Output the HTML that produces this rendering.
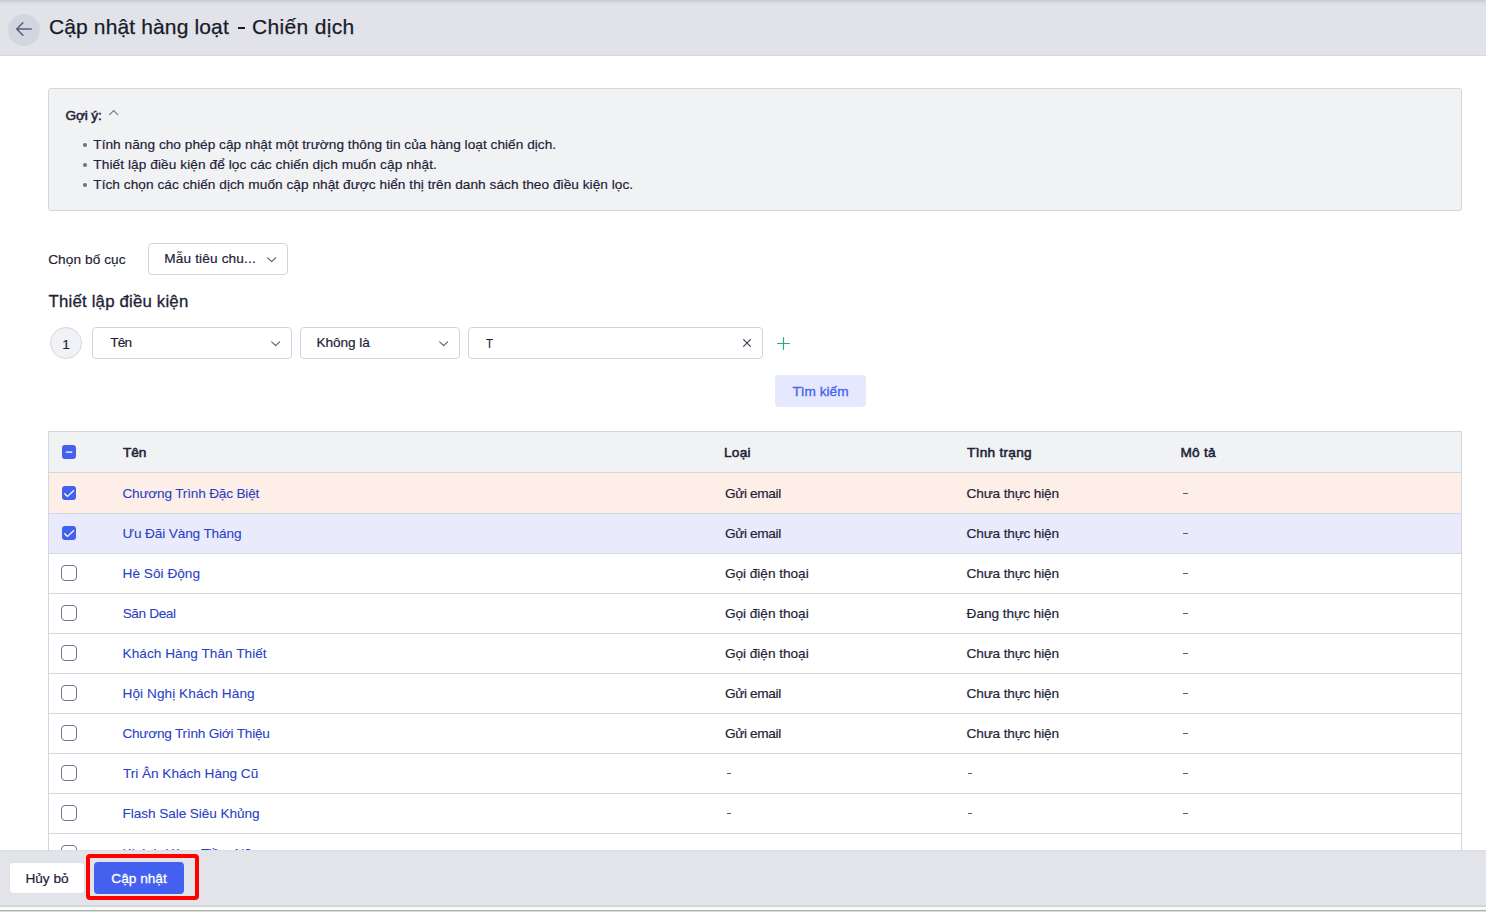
<!DOCTYPE html>
<html lang="vi">
<head>
<meta charset="utf-8">
<title>Cập nhật hàng loạt - Chiến dịch</title>
<style>
*{box-sizing:border-box;margin:0;padding:0}
html,body{width:1486px;height:912px;overflow:hidden;background:#fff}
body{font-family:"Liberation Sans",sans-serif;font-size:13.65px;color:#1d2236;position:relative;-webkit-text-stroke:.18px #1d2236}
.abs{position:absolute}
#hdr{left:0;top:0;width:1486px;height:56px;background:linear-gradient(#c9cacf 0,#dcdde2 3px,#e2e3e8 6px,#e2e3e8 100%);border-bottom:1px solid #d6d8de}
#back{left:8px;top:14px;width:32px;height:32px;border-radius:50%;background:#d2d6e0}
#title{left:0;top:14px;font-size:21px;line-height:26px;color:#161b2d;white-space:nowrap;-webkit-text-stroke:.25px #161b2d}
#title span{position:absolute;top:0}
#hint{left:48px;top:88px;width:1414px;height:123px;background:#f1f2f4;border:1px solid #d3d6df;border-radius:3px}
#hint .h{left:16.5px;top:19px;font-size:13.65px;line-height:16px;white-space:nowrap;letter-spacing:-.14px;-webkit-text-stroke:.55px #1f2438}
#hint ul{list-style:none}
#hint li{position:absolute;left:44.3px;white-space:nowrap;line-height:20px;font-size:13.65px}
#hint li:before{content:"";position:absolute;left:-10px;top:8px;width:4px;height:4px;border-radius:50%;background:#6a7086}
.lbl{white-space:nowrap}
.sel{border:1px solid #d0d3e0;border-radius:4px;background:#fff;height:32px}
.sel span{position:absolute;top:7px;line-height:16px;white-space:nowrap;font-size:13.65px}
.sel svg{position:absolute}
table{border-collapse:collapse}
#tbl{left:48px;top:431px;width:1414px;border:1px solid #d4d7df;border-bottom:none}
.row{position:relative;height:40px;border-bottom:1px solid #d4d7df;background:#fff}
.row.hd{height:41px;background:#f1f2f4;-webkit-text-stroke:.55px #1f2438}
.row span{position:absolute;top:12px;line-height:16px;white-space:nowrap;font-size:13.65px}
.row.hd span,.row.r1 span{top:13px}
.row.r1{height:41px;background:#fdeee8}
.row.r1 .cb.on{top:13px}
.row.r1 span.d4{top:20px}
.row.r2{background:#e9ebfd}
.row .d2,.row .d3,.row .d4{top:19px;width:4.4px;height:1.4px;background:#555a6e;-webkit-text-stroke:0;font-size:0;line-height:0;overflow:hidden}
.row .d2{left:677.6px}
.row .d3{left:918.8px}
.row .d4{left:1134.2px}
.row a{color:#2a40c5;text-decoration:none;-webkit-text-stroke:.08px #2a40c5}
.cb{position:absolute;left:12px;top:11px;width:16px;height:16px;border-radius:4px;border:1.3px solid #6e7591;background:#fff}
.cb.on{left:13px;top:12px;width:14px;height:14px;border-radius:3px;border:none;background:#4361ee}
.cb svg{position:absolute;left:0;top:0}
#ftr{left:0;top:850px;width:1486px;height:62px;background:#e3e4e9;border-top:1px solid #dcdde2}
.btn{position:absolute;height:32px;border-radius:4px;font-size:13.65px;line-height:32px;text-align:center;white-space:nowrap}
</style>
</head>
<body>
<div id="hdr" class="abs">
  <div id="back" class="abs"><svg width="32" height="32" viewBox="0 0 32 32" style="position:absolute;left:0;top:0"><path d="M23.2 15H9.2M14.9 8.8L8.7 15L14.9 21.2" fill="none" stroke="#5b6079" stroke-width="1.6" stroke-linecap="round" stroke-linejoin="round"/></svg></div>
  <div id="title" class="abs"><span style="left:48.9px;letter-spacing:.14px">Cập nhật hàng loạt</span><span style="left:237.5px;top:13px;width:7.2px;height:2px;background:#161b2d"></span><span style="left:252.1px;letter-spacing:.328px">Chiến dịch</span></div>
</div>

<div id="hint" class="abs">
  <div class="h abs">Gợi ý:</div>
  <svg class="abs" style="left:60px;top:21px" width="10" height="6" viewBox="0 0 10 6"><path d="M.6 4.7L4.65 .7L8.7 4.7" fill="none" stroke="#6a7086" stroke-width="1.1" stroke-linecap="round" stroke-linejoin="round"/></svg>
  <ul>
    <li style="top:46px;letter-spacing:.036px">Tính năng cho phép cập nhật một trường thông tin của hàng loạt chiến dịch.</li>
    <li style="top:66px;letter-spacing:.084px">Thiết lập điều kiện để lọc các chiến dịch muốn cập nhật.</li>
    <li style="top:86px;letter-spacing:.045px">Tích chọn các chiến dịch muốn cập nhật được hiển thị trên danh sách theo điều kiện lọc.</li>
  </ul>
</div>

<div class="abs lbl" style="left:48.2px;top:252px;font-size:13.65px;line-height:16px;letter-spacing:.08px">Chọn bố cục</div>
<div class="abs sel" style="left:148px;top:243px;width:140px">
  <span style="left:15.3px;letter-spacing:.137px">Mẫu tiêu chu...</span>
  <svg style="left:118px;top:13px" width="10" height="6" viewBox="0 0 10 6"><path d="M.7 .8L4.65 4.7L8.6 .8" fill="none" stroke="#545a70" stroke-width="1.1" stroke-linecap="round" stroke-linejoin="round"/></svg>
</div>

<div class="abs lbl" style="left:48.6px;top:292px;font-size:16.8px;line-height:20px;letter-spacing:.19px;-webkit-text-stroke:.3px #1f2438" id="cond">Thiết lập điều kiện</div>

<div class="abs" style="left:50px;top:327px;width:32px;height:32px;border-radius:50%;background:#f1f2f5;border:1px solid #d4d7e0;text-align:center;line-height:32px;padding-top:1px;font-size:13.65px">1</div>
<div class="abs sel" style="left:92px;top:327px;width:200px">
  <span style="left:17.3px;letter-spacing:-.8px">Tên</span>
  <svg style="left:178px;top:13px" width="10" height="6" viewBox="0 0 10 6"><path d="M.7 .8L4.65 4.7L8.6 .8" fill="none" stroke="#545a70" stroke-width="1.1" stroke-linecap="round" stroke-linejoin="round"/></svg>
</div>
<div class="abs sel" style="left:300px;top:327px;width:160px">
  <span style="left:15.5px;letter-spacing:-.066px">Không là</span>
  <svg style="left:138px;top:13px" width="10" height="6" viewBox="0 0 10 6"><path d="M.7 .8L4.65 4.7L8.6 .8" fill="none" stroke="#545a70" stroke-width="1.1" stroke-linecap="round" stroke-linejoin="round"/></svg>
</div>
<div class="abs sel" style="left:468px;top:327px;width:295px">
  <span style="left:16.9px;top:8px;transform:scaleX(.84);transform-origin:0 0">T</span>
  <svg style="left:273px;top:10px" width="10" height="10" viewBox="0 0 10 10"><path d="M1.6 1.6L8.4 8.4M8.4 1.6L1.6 8.4" fill="none" stroke="#3d4358" stroke-width="1.2" stroke-linecap="round"/></svg>
</div>
<svg class="abs" style="left:776px;top:336px" width="15" height="15" viewBox="0 0 15 15"><path d="M7.5 1.6V13.4M1.6 7.5H13.4" fill="none" stroke="#2fa87c" stroke-width="1.2" stroke-linecap="round"/></svg>

<div class="btn" style="left:775px;top:375px;width:91px;background:#e6e9fd;color:#4361ee;line-height:34px;-webkit-text-stroke:.3px #4361ee">Tìm kiếm</div>

<div id="tbl" class="abs">
  <div class="row hd"><div class="cb on" style="top:13px"><svg width="14" height="14" viewBox="0 0 14 14"><path d="M3.9 7.1H10.3" stroke="#fff" stroke-width="1.3"/></svg></div><span style="left:73.9px;letter-spacing:-0.01px">Tên</span><span style="left:674.9px;letter-spacing:0.3px">Loại</span><span style="left:918.1px;letter-spacing:0.26px">Tình trạng</span><span style="left:1131.5px;letter-spacing:0.25px">Mô tả</span></div>
  <div class="row r1"><div class="cb on"><svg width="14" height="14" viewBox="0 0 14 14"><path d="M2.7 7.8L5.6 10.4L11.5 4.7" fill="none" stroke="#fff" stroke-width="1.3" stroke-linecap="round" stroke-linejoin="round"/></svg></div><span style="left:73.4px;letter-spacing:-0.198px"><a>Chương Trình Đặc Biệt</a></span><span style="left:675.9px;letter-spacing:-0.353px">Gửi email</span><span style="left:917.6px;letter-spacing:-0.182px">Chưa thực hiện</span><span class="d4">-</span></div>
  <div class="row r2"><div class="cb on"><svg width="14" height="14" viewBox="0 0 14 14"><path d="M2.7 7.8L5.6 10.4L11.5 4.7" fill="none" stroke="#fff" stroke-width="1.3" stroke-linecap="round" stroke-linejoin="round"/></svg></div><span style="left:73.55px;letter-spacing:-0.151px"><a>Ưu Đãi Vàng Tháng</a></span><span style="left:675.9px;letter-spacing:-0.353px">Gửi email</span><span style="left:917.6px;letter-spacing:-0.182px">Chưa thực hiện</span><span class="d4">-</span></div>
  <div class="row"><div class="cb"></div><span style="left:73.55px;letter-spacing:0.014px"><a>Hè Sôi Động</a></span><span style="left:675.9px;letter-spacing:-0.027px">Gọi điện thoại</span><span style="left:917.6px;letter-spacing:-0.182px">Chưa thực hiện</span><span class="d4">-</span></div>
  <div class="row"><div class="cb"></div><span style="left:73.65px;letter-spacing:-0.383px"><a>Săn Deal</a></span><span style="left:675.9px;letter-spacing:-0.027px">Gọi điện thoại</span><span style="left:917.6px;letter-spacing:-0.063px">Đang thực hiện</span><span class="d4">-</span></div>
  <div class="row"><div class="cb"></div><span style="left:73.55px;letter-spacing:0.026px"><a>Khách Hàng Thân Thiết</a></span><span style="left:675.9px;letter-spacing:-0.027px">Gọi điện thoại</span><span style="left:917.6px;letter-spacing:-0.182px">Chưa thực hiện</span><span class="d4">-</span></div>
  <div class="row"><div class="cb"></div><span style="left:73.55px;letter-spacing:0.05px"><a>Hội Nghị Khách Hàng</a></span><span style="left:675.9px;letter-spacing:-0.353px">Gửi email</span><span style="left:917.6px;letter-spacing:-0.182px">Chưa thực hiện</span><span class="d4">-</span></div>
  <div class="row"><div class="cb"></div><span style="left:73.4px;letter-spacing:-0.234px"><a>Chương Trình Giới Thiệu</a></span><span style="left:675.9px;letter-spacing:-0.353px">Gửi email</span><span style="left:917.6px;letter-spacing:-0.182px">Chưa thực hiện</span><span class="d4">-</span></div>
  <div class="row"><div class="cb"></div><span style="left:73.9px;letter-spacing:-0.031px"><a>Tri Ân Khách Hàng Cũ</a></span><span class="d2">-</span><span class="d3">-</span><span class="d4">-</span></div>
  <div class="row"><div class="cb"></div><span style="left:73.55px;letter-spacing:-0.084px"><a>Flash Sale Siêu Khủng</a></span><span class="d2">-</span><span class="d3">-</span><span class="d4">-</span></div>
  <div class="row"><div class="cb"></div><span style="left:73.55px;letter-spacing:-0.02px"><a>Khách Hàng Tiềm Năng</a></span><span class="d2">-</span><span class="d3">-</span><span class="d4">-</span></div>
</div>

<div id="ftr" class="abs">
  <div class="btn" style="left:9px;top:11px;width:76px;background:#fff;color:#1f2438;border:1px solid #dde0e8;line-height:32px;-webkit-text-stroke:.22px #1d2236">Hủy bỏ</div>
  <div class="abs" style="left:86px;top:3px;width:113px;height:46px;border:4px solid #ff0000;border-radius:4px"></div>
  <div class="btn" style="left:94px;top:11px;width:90px;background:#4361ee;color:#fff;line-height:34px;-webkit-text-stroke:.3px #fff">Cập nhật</div>
  <div class="abs" style="left:0;top:54px;width:1486px;height:2px;background:#d5d6da"></div>
  <div class="abs" style="left:0;top:56px;width:1486px;height:3px;background:#fafafa"></div>
  <div class="abs" style="left:0;top:59px;width:1486px;height:1px;background:#adb0ad"></div>
  <div class="abs" style="left:0;top:60px;width:1486px;height:1px;background:#d5dfd8"></div>
</div>
</body>
</html>
